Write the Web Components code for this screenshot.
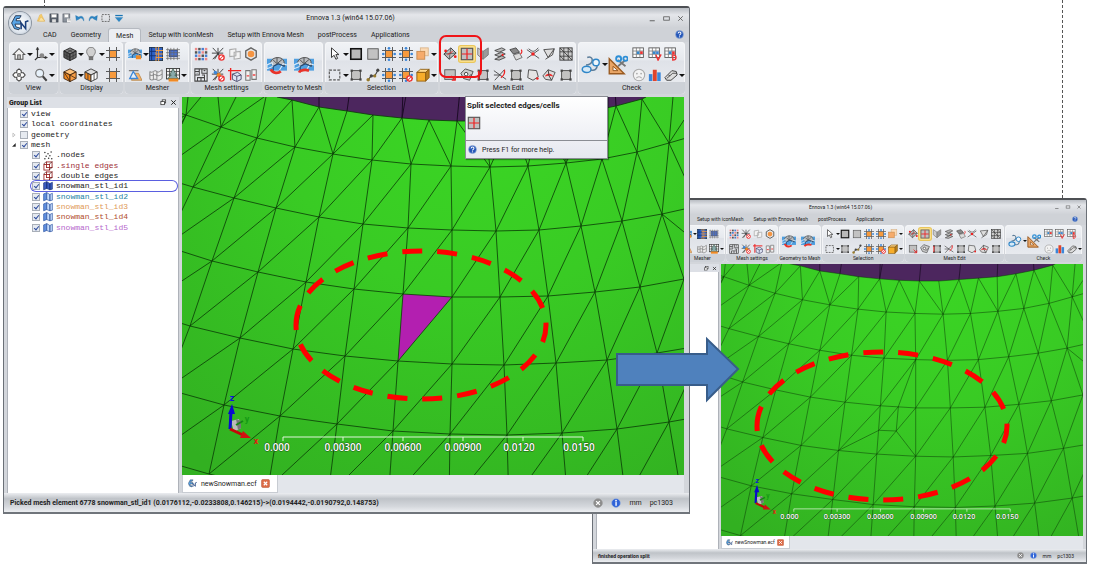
<!DOCTYPE html>
<html lang="en">
<head>
<meta charset="utf-8">
<title>Ennova mesh edit: split selected cells</title>
<style>
html,body{margin:0;height:100%;background:#fff;overflow:hidden}
body{font-family:Roboto,"Liberation Sans",sans-serif;color:#222}
</style>
</head>
<body>
<split-tutorial></split-tutorial>
<script>
/* ---------- icon library, drawn on a 16 x 16 grid ---------- */
const box = (x,y,w,h,f,s='#333',k=1)=>`<rect x="${x}" y="${y}" width="${w}" height="${h}" fill="${f}" stroke="${s}" stroke-width="${k}"/>`;
const ln = (d,s='#333',k=1,f='none')=>`<path d="${d}" stroke="${s}" stroke-width="${k}" fill="${f}"/>`;
const dot = (x,y,r,f)=>`<circle cx="${x}" cy="${y}" r="${r}" fill="${f}"/>`;
const corners = (c)=>[[3,3],[13,3],[3,13],[13,13]].map(p=>`<rect x="${p[0]-1.2}" y="${p[1]-1.2}" width="2.6" height="2.6" fill="${c}"/>`).join('');
const hash = '<path d="M4 0V16M12 0V16M0 4H16M0 12H16" stroke="#555" stroke-width="1.1"/>';
const cube = (a,b,c,s)=>ln('M8 1L15 4.5L8 8L1 4.5Z',s,1,a)+ln('M1 4.5L8 8V15.5L1 12Z',s,1,b)+ln('M15 4.5L8 8V15.5L15 12Z',s,1,c);
const geo = '<rect x="0" y="3" width="16" height="9.5" fill="#4f9fe0"/>'+ln('M3 5.5C4 1.5 12 .5 13.5 5L14 9L9 7L5 9Z','#555',.8,'#b9bcc0')+ln('M8 1.8V7M5 4L8 7L12 3.6','#555',.8)+ln('M0 8L4 6L5 9L0 11ZM16 8L13 7L10 12','#dcecfa',.9)+ln('M5 9L9 7L14 9M5 9V12.5','#234a78',.9);
const net = ln('M2 1L14 14M14 1L2 14M8 1V8M1 7H14M4 14L8 8L12 14');
const no = '<circle cx="12" cy="12" r="3" fill="#fff" stroke="#e33" stroke-width="1.6"/><path d="M10 14L14 10" stroke="#e33" stroke-width="1.2"/>';
const calc = (c,t)=>box(1,1,12,11,'#fff','#555')+ln('M1 4.6H13M1 8.3H13M5 1V12M9 1V12','#777',.9)+`<rect x="5.5" y="5" width="3" height="3" fill="#38c"/><rect x="9.3" y="5" width="3" height="3" fill="${c}"/>`+t;
const bluePoints=dot(8,1.5,1.5,'#3b86d8')+dot(8,14.5,1.5,'#3b86d8')+dot(1.5,8,1.5,'#3b86d8')+dot(14.5,8,1.5,'#3b86d8');
const ICONS = {
home: ln('M1.5 8.5L8 2L14.5 8.5H12.5V14H3.5V8.5Z','#555',1.2,'#f3f3f3')+box(6.5,9,3,5,'#bbb','#555'),
axes: ln('M4 1V12H14M4 12L1 15','#333',1.4)+ln('M4 0L2.5 3H5.5ZM15.5 12L12.5 10.5V13.5Z','#333',.5,'#333')+dot(9,10,2.8,'#888'),
pan: ln('M8 1L10.5 3V5.5H13L15 8L13 10.5H10.5V13L8 15L5.5 13V10.5H3L1 8L3 5.5H5.5V3Z','#444',1.2,'#fff')+box(6.5,6.5,3,3,'#999','#444',.8),
zoom: '<circle cx="6.5" cy="6" r="4.5" fill="#e8f2fb" stroke="#777" stroke-width="1.4"/>'+ln('M10 9.5L14.5 14.5','#444',2.4),
cubeDark: cube('#888','#555','#6c6c6c','#222')+ln('M4.5 2.7L11.5 6.3V14M11.5 2.7L4.5 6.3V14M1 8.3L8 12L15 8.3','#333',.8),
bulb: ln('M5.5 11C5 9 3 8 3 5.3A5 5 0 0 1 13 5.3C13 8 11 9 10.5 11Z','#777',1,'#d0d0d0')+box(6,11.5,4,3,'#777','#666'),
gridSel: '<rect x="4" y="4" width="8" height="8" fill="#f79a3c"/>'+hash,
gridSelPts: '<rect x="4" y="4" width="8" height="8" fill="#f79a3c"/>'+hash+bluePoints,
gridSelNo: '<rect x="4" y="4" width="8" height="8" fill="#f79a3c"/>'+hash+bluePoints+no,
cubeOrange: cube('#ffc27a','#f08a24','#f79d46','#3b2410')+ln('M1 4.5L8 15.5M8 8L15 12','#3b2410',.9),
cubeOpen: cube('#ddd','#f08a24','#fff','#333')+ln('M4.5 6V13.5M11.5 6V13.5','#333',.9),
geoTop: geo+'<rect x="9" y="9.500" width="6" height="4.500" fill="#f08a24"/>',
meshBlue: box(.5,.5,15,15,'#2d62c8','#234')+ln('M8 0V16M11 0V16M8 4H16M8 8H16M8 12H16','#f59a3a',1.1)+ln('M3 0V16M0 5H8M0 10H8','#14306e'),
meshHatch: box(4,4,9,7,'#4b74d6','#2a4aa0')+ln('M0 3H16M0 6.5H16M0 10H16M0 13H16M2 1V15M5.5 1V15M9 1V15M13 1V15','#666',.8),
triPlane: ln('M6 6H12L16 14H4Z','#b98a50',1,'#f7b36c')+ln('M1 3H12','#777',1.4)+ln('M2 12L6 4L11 12Z','#3b86d8',1.5,'#e6f0fa'),
surf: ln('M1 4C4 7 6 1 9 4C11 6 13 3 15 2V12C12 14 11 15 8 13C6 12 4 15 1 13ZM1 8C4 10 6 6 8 8C11 10 13 8 15 7M5 5V13M9 4V13','#777',1,'#ececec'),
meshTree: box(.5,.5,15,12,'#eee','#333')+ln('M0 4H16M0 8H16M4 0V13M12 0V13','#444',.9)+ln('M8 1L12 8H10L14 12H2L6 8H4Z','#354',.8,'#8aa')+'<rect x="3" y="12" width="11" height="3.5" fill="#f08a24"/>',
sizes: [1,4.8,8.6,12.4].map((y,i)=>[1,4.8,8.6,12.4].map((x,j)=>`<rect x="${x}" y="${y}" width="2.8" height="2.8" fill="${(i+j)%3==0?'#e88':(i+j)%3==1?'#555':'#4a7fd0'}"/>`).join('')).join(''),
netNo: net+no,
ghost: ln('M2 3L9 2V10L2 11ZM7 6L14 5V13L7 14Z','#aaa',1.2,'#f4f4f4'),
hexOrange: ln('M8 1L14 4.5V11.5L8 15L2 11.5V4.5Z','#666',1.6,'#e8e8e8')+dot(8,8,3.8,'#f59543'),
maze: ln('M1 1H15V15H1ZM1 4H6V8H1M6 1V4M9 1V6H15M4 15V11H8V15M8 11H12V8H9M12 11V15M3 6H4M11 3H13','#444',1.2),
netPts: net+dot(5,5,2,'#3b86d8')+dot(9,8,2.4,'#f08a24')+no,
cubeRed: ln('M5 7L11 5L15 8V13L10 15.5L5 13Z','#446',1,'#dfe5f5')+ln('M5 7L10 9.5L15 8M10 9.5V15','#446')+ln('M3 0V14M0 3H15','#e22',1.6),
panels: ln('M2 3H7V14H2ZM9 2H14V13H9Z','#777',1.2,'#f2f2f2')+ln('M3 9H6M10 8H13','#e44',1.6),
geoBig: geo+ln('M3 11.5C5 15 9 15 11 13','#e8332a',2.2),
geoBig2: geo+ln('M4 14C5 12 9 11.5 12 12.5','#e8332a',2.2),
cursor: ln('M4 1V12L7 9.5L9 14L11 13L9 8.7H12.5Z','#333',1.1,'#fff'),
dashSel: '<rect x="1.5" y="2.5" width="12" height="11" fill="none" stroke="#555" stroke-width="1.3" stroke-dasharray="3 1.6"/>',
square: box(2,2,12,12,'#b9b9b9','#111',1.8),
squareThin: box(2,2,12,12,'#c2c2c2','#555',1),
squarePts: box(3,3,10,10,'#c2c2c2','#444',1)+corners('#444'),
nodes: ln('M2 14L6 9L10 9L14 2','#444',1.2)+dot(2.5,13.5,2,'#987b2c')+dot(6,9,1.8,'#444')+dot(10,9,1.8,'#987b2c')+dot(13.5,2.5,1.8,'#444'),
layerFade: box(5,1,9,9,'#fbd9b4','#d8b48a')+box(1,5,9,9,'#f6ab6b','#c98a4c'),
cubeYellow: ln('M1 5L5 1.5H15L11 5Z','#8a5a10',1,'#ffd98a')+ln('M11 5L15 1.5V11L11 15Z','#8a5a10',1,'#b9801d')+box(1,5,10,10,'#f7ad2a','#8a5a10'),
rotQuad: ln('M1 8L9 1L15 7L7 14Z','#444',1.1,'#bdbdbd')+ln('M1 8L15 7M9 1L7 14','#444',.8)+dot(3,4.5,1.6,'#e22')+dot(14,11,1.6,'#e22')+ln('M5 9L11 5','#e22'),
split: box(1.5,1.5,13,13,'#c0c0c0','#555',1.3)+ln('M8 2V14M2 8H14','#e22',1.4),
foldV: ln('M2 1L8 5V14L2 9Z','#777',1,'#ccc')+ln('M14 1L8 5V14L14 9Z','#777',1,'#9a9a9a'),
stack: ln('M2 4L10 1L14 3L7 6ZM2 9L10 6L14 8L7 11ZM2 14L10 10L14 12L7 15Z','#444',1,'#bbb')+dot(11,9,1.2,'#e22'),
flip: ln('M1 3L8 1L12 6L5 8Z','#444',1,'#888')+ln('M5 9L12 7L15 12L8 15Z','#666',1,'#ddd')+ln('M14 3C15 5 15 7 13 8','#e22',1.3),
crossPt: ln('M1 3L15 13M15 3L1 13M3 2C8 6 9 6 14 1','#444',1)+dot(8,8,2,'#e22'),
wing: ln('M2 3L14 2L7 12ZM14 2L12 9L7 12L4 14','#444',1,'#ddd'),
gridTri: box(1,1,14,14,'#ccc','#333')+ln('M1 5.5H15M1 10.5H15M5.5 1V15M10.5 1V15M1 1L15 15M1 10L6 15M10 1L15 6','#333',.9),
redCorner: box(2,2,12,11,'#c0c0c0','#555')+ln('M9 9L14 14M14 10V14H10','#e22',1.3),
tiltQuad: ln('M1 6L6 1L15 4L11 14L4 12Z','#444',1,'#ccc')+'<circle cx="7" cy="7" r="2" fill="#fff" stroke="#333"/>'+ln('M9 11L13 7'),
redSide: box(4,3,9,10,'#c6c6c6','#444')+corners('#444')+ln('M3 3V13','#e22',1.6),
crossRed: ln('M1 3L15 13M13 2L2 14M1 8L8 8','#444',1)+ln('M13 2C14 6 12 9 9 11','#e22',1.5),
bend: ln('M3 2L12 3L14 10L8 14L2 11Z','#444',1,'#e4e4e4')+dot(13,12,1.5,'#e22'),
fan: ln('M1 9L7 2L15 5L11 14L4 13Z','#444',1,'#ddd')+ln('M4 9A5 5 0 0 1 12 9L8 8Z','#e22',1.1,'#f9a')+ln('M7 2L8 9L11 14'),
steth: ln('M5 2C7 1 9 2 9 4C9 7 6 8 4 8','#5b7c99',1.2)+'<ellipse cx="4.500" cy="11.500" rx="3.500" ry="2.500" fill="#d6e9f7" stroke="#2e86c8" stroke-width="1.2"/>'+ln('M8 12C11 13 13 11 13 8','#5b7c99',1.2)+'<circle cx="12" cy="6" r="2.600" fill="#eef6fc" stroke="#2e86c8" stroke-width="1.1"/>',
scissor: ln('M1 3V15H13Z','#9a5a20',1.1,'#e8a566')+ln('M4 9V12.5H8Z','#9a5a20',.8,'#f5f5f5')+ln('M8 9L14 4M8 4L14 9','#777',1.4)+'<circle cx="8.5" cy="3" r="2" fill="none" stroke="#2e8fd6" stroke-width="1.5"/><circle cx="14" cy="3" r="1.7" fill="none" stroke="#2e8fd6" stroke-width="1.5"/>',
calc: calc('#e33',''),
calcV: calc('#3b86d8',ln('M9 9L11.5 15L15 8.5','#e33',1.6)),
calcD: calc('#e33',ln('M10 9V15C15 15 15 9 10 9Z','#e33',1.5)),
sad: '<circle cx="8" cy="8" r="6.5" fill="#f3f3f3" stroke="#aaa" stroke-width="1.2"/>'+dot(5.6,6.4,1,'#aaa')+dot(10.4,6.4,1,'#aaa')+ln('M5 11.5C6.5 9.5 9.5 9.5 11 11.5','#aaa',1.2),
bars: '<rect x="1" y="7" width="4" height="8" fill="#3b86d8"/><rect x="5.5" y="2" width="4.5" height="13" fill="#e0442c"/><rect x="10.5" y="5" width="4" height="10" fill="#3b86d8"/>',
ruler: ln('M1 11L9 3L14 4L15 8L8 14H3Z','#444',1.1,'#ddd')+ln('M3 12L10 6H15M5 8L7 9','#444'),
open: ln('M2 13L6 3L9 2L10 5L14 13Z','#d9a544',.6,'#f8cf6a')+ln('M4 13L8 6L14 13Z','#c98e2e',.4,'#fbe2a0'),
save: box(1.5,1.5,13,13,'#58606c','#3a414c')+box(4,2,8,5,'#fff','#aaa',.6)+'<rect x="5" y="10" width="6" height="5" fill="#ddd"/>',
saveAs: box(1.5,1.5,11,13,'#8b929c','#555c66')+box(4,2,6,5,'#fff','#aaa',.6)+'<rect x="8" y="9" width="6" height="6" fill="#f2f2f2"/>'+ln('M9 11H14','#888'),
undo: ln('M1 4L2 12L7 9.5C9 7 12 8 14 13C15 7 11 3 6 6.5Z','#1c6ca6',.5,'#2d86c4'),
redo: ln('M15 4L14 12L9 9.5C7 7 4 8 2 13C1 7 5 3 10 6.5Z','#1c6ca6',.5,'#2d86c4'),
menu: ln('M2 4H14','#1c76b4',2)+ln('M2 7H14L8 14Z','#1c76b4',.5,'#2d86c4'),
logo: ln('M4 1.5H9L7.500 4H5L4.500 6H8.500V9H3.500L4.500 11.500L8 12.500L7 14L3 13L0.500 8Z','#16243c',.7,'#5aa5e6')+ln('M9 13.500V8L13 13V7L15.500 6','#1a3f7c',1.4),
help: '<circle cx="8" cy="8" r="7" fill="#2456b8" stroke="#9db6dc"/>'+ln('M5.5 6.2C5.5 2.8 10.8 3 10.5 6C10.2 7.8 8 7.8 8 9.8','#fff',1.8)+dot(8,12.2,1.1,'#fff'),
info: '<circle cx="8" cy="8" r="7" fill="#2f63d8" stroke="#9db6dc"/><rect x="7" y="6.5" width="2.2" height="6" fill="#fff"/>'+dot(8,4.2,1.4,'#fff'),
cancel: '<circle cx="8" cy="8" r="7" fill="#8c8c8c" stroke="#999"/>'+ln('M5 5L11 11M11 5L5 11','#fff',2),
closeTab: '<rect x="1" y="1" width="14" height="14" rx="2" fill="#dd6c48" stroke="#b85838"/>'+ln('M5 5L11 11M11 5L5 11','#fff',2.2),
minimize: ln('M3 12H12','#555',1.6), maximize: box(3,5,10,6,'none','#555',1.4), close: ln('M4 4L12 12M12 4L4 12','#555',1.5),
restore: box(5,2,8,7,'#fff','#222',1.6)+box(2,6,8,7,'#fff','#222',1.6), closeBold: ln('M3 3L13 13M13 3L3 13','#222',2.2),
points: [[3,4],[8,6],[13,3],[5,10],[11,9],[3,14],[9,13],[14,14]].map(p=>dot(p[0],p[1],1.2,'#333')).join(''),
wire: box(1.5,5.5,9,9,'none','#922',1.4)+box(5.5,1.5,9,9,'none','#922',1.4)+ln('M1 5L5 1M10 14L15 10M10 5L15 1','#422',1.1),
part: ln('M1 3L6 1V12L1 14Z','#234b9c',1,'#5f8fe0')+ln('M6 1L11 4V14L6 12ZM11 4L15 2V13L11 14Z','#234b9c',1,'#c4dafa'),
partDark: ln('M1 3L6 1V12L1 14ZM6 1L11 4V14L6 12ZM11 4L15 2V13L11 14Z','#152c74',1,'#3c5cc0'),
plus: ln('M5 3L11 8L5 13Z','#888',1.2,'#fff'), minus: ln('M12 4V12H4Z','#222',1,'#222')
};
customElements.define('glyph-icon', class extends HTMLElement{
  connectedCallback(){
    if(this.shadowRoot) return;
    this.attachShadow({mode:'open'}).innerHTML=`<style>:host{display:block;flex:none;width:var(--icon);height:var(--icon)}svg{display:block;width:100%;height:100%}</style><svg viewBox="0 0 16 16" aria-hidden="true">${ICONS[this.getAttribute('name')]}</svg>`;
  }
});

/* ---------- ribbon tool button ---------- */
customElements.define('tool-button', class extends HTMLElement{
  connectedCallback(){
    if(this.shadowRoot) return;
    const n=this.getAttribute('name');
    this.attachShadow({mode:'open'}).innerHTML=`<style>
:host{display:flex}
:host([big]){--icon:var(--bigicon)}
button{display:flex;align-items:center;gap:1px;border:0;background:none;margin:0;padding:0;border-radius:1px}
:host([active]) button{background:#fbe08a;box-shadow:0 0 0 1px #fbe08a,0 0 0 2px #e9c65c}
i{border:solid transparent;border-width:var(--caret) var(--caret) 0;border-top-color:#111}
</style><button aria-label="${n}"><glyph-icon name="${n}"></glyph-icon>${this.hasAttribute('menu')?'<i></i>':''}</button>`;
  }
});

/* ---------- titled ribbon group; tools come in through the slot ---------- */
customElements.define('ribbon-group', class extends HTMLElement{
  connectedCallback(){
    if(this.shadowRoot) return;
    const cols=this.getAttribute('cols').replace(/(\d+)fr/g,'minmax(0,$1fr)');
    this.attachShadow({mode:'open'}).innerHTML=`<style>
:host{display:grid;grid-template-rows:1fr var(--label);border-radius:4px;overflow:hidden;min-width:0;background:linear-gradient(#f1f3f6,#e6e9ee 35%,#dfe2e8 36%,#eceef2);box-shadow:inset 0 0 0 1px #f4f5f7}
.tools{display:grid;grid-template-columns:${cols};align-items:center;align-content:center;row-gap:var(--rowgap);padding:var(--toolpad) 1px 0 3px;min-width:0}
.label{background:#cdd1d7;white-space:nowrap;line-height:var(--label);font-size:var(--fs);display:flex;justify-content:center}
</style><div class="tools"><slot></slot></div><div class="label">${this.getAttribute('label')}</div>`;
  }
});

/* ---------- one row of the group tree ---------- */
customElements.define('tree-row', class extends HTMLElement{
  connectedCallback(){
    if(this.shadowRoot) return;
    const a=n=>this.getAttribute(n), icon=a('icon'), ex=a('expander');
    this.attachShadow({mode:'open'}).innerHTML=`<style>
:host{display:flex;align-items:center;padding-left:3px;--icon:10px}
:host([child]){padding-left:15px}
label{display:flex;align-items:center;gap:3px;flex:1;margin-right:1px;padding-left:1px;border-radius:5px;white-space:pre;color:${a('color')||'#222'};font:8px/10px "Liberation Mono",monospace}
:host([selected]) label{box-shadow:0 0 0 1px #5a5fe0}
.ex{width:8px;--icon:6px}
input{appearance:none;margin:0;width:8px;height:8px;border:1px solid #a9afb8;background:#e6eaf0;position:relative;flex:none}
input:checked::after{content:"";position:absolute;left:2px;top:0;width:2px;height:4px;border:solid #2f4d9e;border-width:0 1px 1px 0;rotate:40deg}
</style><span class="ex">${ex?`<glyph-icon name="${ex}"></glyph-icon>`:''}</span>
<label><input type="checkbox" ${this.hasAttribute('off')?'':'checked'}>${icon?`<glyph-icon name="${icon}"></glyph-icon>`:''}<span><slot></slot></span></label>`;
  }
});

/* ---------- 3D viewport: triangulated surface, triad and scale ---------- */
const A=[[292,100],[319,107],[347,111],[373,115],[402,118],[429,120],[457,121],[484,121],[512,119],[539,117],[565,115],[591,111],[616,106],[642,99]];
const B=[[148,102],[186,115],[221,127],[257,138],[295,147],[333,154],[372,160],[411,164],[451,166],[490,167],[528,166],[566,163],[602,159],[637,152],[669,143],[700,134]];
const C=[[112,157],[153,175],[193,187],[234,198],[276,208],[319,217],[363,224],[408,228],[452,230],[496,231],[539,230],[581,226],[622,221],[662,214],[698,206]];
const D=[[165,246],[212,261],[258,272],[306,282],[354,289],[403,294],[452,297],[500,297],[548,296],[595,292],[640,287],[684,279]];
const E=[[138,310],[190,326],[240,338],[293,349],[345,356],[398,361],[452,364],[504,365],[556,363],[607,360],[657,353],[705,345]];
const F=[[166,389],[224,405],[280,416],[337,424],[393,431],[450,434],[507,435],[562,433],[617,429],[669,422],[720,413]];
const G=[[150,457],[209,474],[268,488],[328,496],[388,503],[449,506],[509,507],[568,505],[626,500],[681,493],[736,484]];
const seg=(p,q)=>`M${p}L${q}`, poly=r=>'M'+r.join('L');
function lattice(top,bot,off){ /* off: index shift from the lower row to the upper one */
  let d='';
  bot.forEach((p,i)=>{const u=top[i+off],v=top[i+off+1]; if(u)d+=seg(p,u); if(v)d+=seg(p,v);});
  return d;
}
function surface(split){
  let d=[A,B,C,D,E,F,G].map(poly).join('');
  d+=lattice(B,C,0)+lattice(C,D,2)+lattice(D,E,0)+lattice(E,F,1)+lattice(F,G,0);
  [[0,4],[0,3],[1,4],[1,5],[2,5],[3,5],[3,6],[4,6],[4,7],[5,7],[5,8],[6,8],[6,9],[7,9],[8,9],[8,10],[9,10],[9,11],[10,11],[11,11],[11,12],[12,12],[12,13],[13,13],[13,14]].forEach(([a,b])=>d+=seg(A[a],B[b]));
  d+='M257 138L266 97M221 127L218 97M221 127L236 97M221 127L264 97M186 115L188 97M186 115L201 97M186 115L182 124M669 143L673 97M662 214L684 232M669 143L684 120M642 99L646 97M277 97L292 100';
  if(split)d+='M428 295L425 329L401 328L428 295L452 230M425 329L452 364M401 328L345 356';
  return d;
}
customElements.define('mesh-view', class extends HTMLElement{
  connectedCallback(){
    if(this.shadowRoot) return;
    const split=this.hasAttribute('split');
    const ticks=[283,343,403,463,523,583];
    const labels=[[277,'0.000'],[343,'0.00300'],[403,'0.00600'],[463,'0.00900'],[519,'0.0120'],[579,'0.0150']];
    this.attachShadow({mode:'open'}).innerHTML=`<style>
:host{display:block;min-height:0;min-width:0;overflow:hidden;background:#37c223}
svg{display:block;width:100%;height:100%}
text{font:600 10px "Open Sans",sans-serif;text-anchor:middle;fill:#fff;stroke:#1c5a14;stroke-width:1;paint-order:stroke}
.ax{font:bold 9px Roboto,sans-serif;stroke:none}
</style><svg viewBox="182 97 502 378" preserveAspectRatio="xMidYMid slice">
<defs><radialGradient id="g" gradientUnits="userSpaceOnUse" cx="480" cy="80" r="470"><stop offset="0" stop-color="#3bd824"/><stop offset=".45" stop-color="#39cb24"/><stop offset="1" stop-color="#32b021"/></radialGradient></defs>
<rect x="180" y="95" width="510" height="384" fill="url(#g)"/>
<path d="M277 97L${A.join('L')}L646 97Z" fill="#4c265e"/>
<path d="M319 107V90M347 111L350 90M402 118L403 90M402 118L407 90M457 121L460 90M512 119L515 90M565 115L566 90M616 106L615 90" stroke="#1c0c26" stroke-width="1"/>
${split?'':'<path d="M403 294L452 297L398 361Z" fill="#b31fb0"/>'}
<path d="${surface(split)}" fill="none" stroke="#0a3a06" stroke-width="${split?0.7:0.8}"/>
<path d="M231 421L239 419L241 428L234 432Z" fill="#bbb"/><path d="M236 419L241 421V428L238 430Z" fill="#777"/>
<path d="M236 425L243 421" stroke="#138a13" stroke-width="2"/>
<path d="M230 429L231 412" stroke="#0a0ad0" stroke-width="3"/><path d="M228 414L232 404L235 414Z" fill="#0a0ad0"/>
<path d="M230 429L243 435" stroke="#c40808" stroke-width="3"/><path d="M243 431L251 438L240 438Z" fill="#d01010"/>
<text class="ax" x="232" y="401" style="fill:#1010e0">z</text><text class="ax" x="247" y="422" style="fill:#159a15">y</text><text class="ax" x="256" y="444" style="fill:#e02010">x</text>
<path d="M283 441V437H583V441${ticks.slice(1,5).map(x=>`M${x} 437V441`).join('')}" fill="none" stroke="#dff5da"/>
${labels.map(l=>`<text x="${l[0]}" y="451">${l[1]}</text>`).join('')}
</svg>`;
  }
});

/* ---------- application window ---------- */
const tools = list => list.split(' ').map(t=>{
  const n=t.replace(/[\^*]/g,'');
  return `<tool-button name="${n}"${t.includes('^')?' menu':''}${t.includes('*')?' active':''}></tool-button>`;
}).join('');
const GROUPS = [
 ['View','22fr 22fr','home^ axes^ pan zoom^'],
 ['Display','21fr 22fr 17fr','cubeDark^ bulb^ gridSel cubeOrange^ cubeOpen gridSel'],
 ['Mesher','21fr 17fr 22fr','geoTop^ meshBlue meshHatch triPlane surf meshTree^'],
 ['Mesh settings','repeat(4,1fr)','sizes netNo ghost hexOrange maze netPts cubeRed panels'],
 ['Geometry to Mesh','1fr 1fr',null],
 ['Selection','21fr 17fr 16fr 17fr 17fr 21fr','cursor^ square squareThin gridSelPts gridSelPts layerFade^ dashSel^ squarePts nodes gridSelPts gridSelNo cubeYellow^'],
 ['Mesh Edit','repeat(8,1fr)','rotQuad split* foldV stack flip crossPt wing gridTri redCorner tiltQuad redSide crossRed squarePts bend fan squarePts'],
 ['Check','28fr 25fr 17fr 17fr 21fr',null]
];
function group([label,cols,list]){
  let body;
  if(label==='Geometry to Mesh') body='<tool-button big name="geoBig"></tool-button><tool-button big name="geoBig2"></tool-button>';
  else if(label==='Check') body='<tool-button big name="steth" menu style="grid-row:span 2"></tool-button><tool-button big name="scissor" style="grid-row:span 2"></tool-button>'+tools('calc calcV calcD sad bars ruler^');
  else body=tools(list);
  return `<ribbon-group label="${label}" cols="${cols}">${body}</ribbon-group>`;
}
customElements.define('app-window', class extends HTMLElement{
  connectedCallback(){
    if(this.shadowRoot) return;
    const small=this.hasAttribute('compact');
    const tabs=['CAD','Geometry','Mesh','Setup with iconMesh','Setup with Ennova Mesh','postProcess','Applications'];
    this.attachShadow({mode:'open'}).innerHTML=`<style>
:host{--fs:7px;--icon:14px;--bigicon:20px;--caret:3px;--label:12px;--rowgap:7px;--toolpad:5px;--title:20px;--tabs:14px;--ribbon:52px;--status:19px;--doc:18px;--panel:172px;--head:11px;
 display:grid;box-sizing:border-box;grid-template-rows:var(--title) var(--tabs) var(--ribbon) 1fr var(--status);
 border:1px solid #6b7077;border-width:2px 1px;border-top-color:#4d5054;border-bottom-color:#70757b;border-radius:3px 3px 0 0;padding:0 3px;background:#d3d6db;font-size:var(--fs)}
:host([compact]){--fs:5px;--icon:10px;--bigicon:14px;--caret:2px;--label:8px;--rowgap:5px;--toolpad:3px;--title:13px;--tabs:12px;--ribbon:37px;--status:13px;--doc:13px;--panel:123px;--head:8px}
header{display:grid;grid-row:span 2;grid-template-columns:29px 1fr;grid-template-rows:var(--title) var(--tabs);margin:0 -3px;padding:0 3px;background:linear-gradient(#b9bdc3,#e4e6ea 20%,#cfd2d7 58%,#cfd2d7)}
:host([compact]) header{grid-template-columns:96px 1fr}
.orb{grid-row:span 2;width:22px;height:22px;border-radius:50%;margin:4px 0 0 2px;display:grid;place-items:center;border:0;padding:0;background:radial-gradient(#fff,#dfe6ee 60%,#9aa6b4);box-shadow:0 0 0 1px #8b95a1;--icon:18px}
.bar{display:grid;grid-template-columns:1fr auto 1fr;align-items:center;--icon:10px}
.qat,.ctl{display:flex;gap:3px}
.ctl{justify-content:flex-end;gap:5px;padding-right:1px;--icon:9px}
:host([compact]) .ctl{--icon:6px}
h1{margin:0 21px 0 0;font:inherit;white-space:nowrap}
:host([compact]) h1{margin-right:94px}
.plain{border:0;background:none;padding:0;margin:0;font:inherit;color:inherit;white-space:nowrap}
nav{display:flex;align-items:stretch;--icon:9px}
nav .plain{padding:0 7px}
nav .on{background:#eceef2;border-radius:2px 2px 0 0;box-shadow:0 0 0 1px #b5b9c0;margin:1px 1px 0}
:host([compact]) nav{--icon:6px}
:host([compact]) nav .plain{padding:0 5px}
nav .plain.help{margin-left:auto;padding:0 2px 2px}
.ribbon{display:grid;grid-template-columns:49fr 64fr 64fr 71fr 59fr 114fr 137fr 107fr;gap:2px;padding:0 1px 0 2px;background:#d3d6db}
:host([compact]) .ribbon{gap:1px;padding:0 1px 0 0}
:host([compact]) ribbon-group:first-child{grid-column:3}
.main{display:grid;min-height:0;grid-template-columns:var(--panel) 1fr;gap:3px;padding:3px 2px 0 0}
:host([compact]) .main{gap:2px;padding:2px 0 0}
.panel,.view{display:grid;min-height:0;min-width:0}
.panel{grid-template-rows:var(--head) 1fr;--icon:7px}
:host([compact]) .panel{--icon:5px}
.ph{display:flex;align-items:center;gap:3px;font-weight:bold;padding:0 2px;background:#dde0e6}
.ph b{margin-right:auto}
.tree{background:#fff;border:1px solid #aeb2b9;border-width:0 1px;display:block}
.view{grid-template-rows:1fr var(--doc);background:#e3e6eb}
.doc{display:flex;align-items:center;gap:4px;background:#fff;justify-self:start;padding:0 7px 0 5px;--icon:9px;border:1px solid #c8ccd2;border-top:0;box-sizing:border-box;height:100%}
:host([compact]) .doc{--icon:7px;gap:2px;padding:0 5px 0 4px}
footer{display:flex;align-items:center;background:linear-gradient(#eceef1,#bfc3c8 30%,#d4d7dc 70%,#eceef1);margin:0 -3px;padding:0 16px 0 6px;white-space:nowrap;--icon:10px;gap:8px}
footer b{margin-right:auto}
:host([compact]) footer{--icon:7px;gap:6px;padding:0 12px 0 5px}
</style>
<header>
${small?'<span style="grid-row:span 2"></span>':'<button class="orb" aria-label="Application menu"><glyph-icon name="logo"></glyph-icon></button>'}
<div class="bar"><div class="qat">${small?'':['open','save','saveAs','undo','redo','dashSel','menu'].map(n=>`<button class="plain" aria-label="${n}"><glyph-icon name="${n}"></glyph-icon></button>`).join('')}</div>
<h1>Ennova 1.3 (win64 15.07.06)</h1>
<div class="ctl">${['minimize','maximize','close'].map(n=>`<button class="plain" aria-label="${n}"><glyph-icon name="${n}"></glyph-icon></button>`).join('')}</div></div>
<nav>${tabs.slice(small?3:0).map(t=>`<button class="plain${t==='Mesh'?' on':''}">${t}</button>`).join('')}<button class="plain help" aria-label="Help"><glyph-icon name="help"></glyph-icon></button></nav>
</header>
<div class="ribbon">${GROUPS.slice(small?2:0).map(group).join('')}</div>
<div class="main">
<section class="panel"><div class="ph"><b>${small?'':'Group List'}</b><glyph-icon name="restore"></glyph-icon><glyph-icon name="closeBold"></glyph-icon></div>
<div class="tree"><slot></slot></div></section>
<section class="view"><mesh-view ${small?'split':''}></mesh-view>
<div class="doc"><glyph-icon name="logo"></glyph-icon><span>newSnowman.ecf</span><button class="plain" aria-label="Close document"><glyph-icon name="closeTab"></glyph-icon></button></div></section>
</div>
<footer><b>${this.getAttribute('status')}</b><button class="plain" aria-label="Cancel"><glyph-icon name="cancel"></glyph-icon></button><glyph-icon name="info"></glyph-icon><span>mm</span><span>pc1303</span></footer>`;
  }
});

/* ---------- hover help card ---------- */
customElements.define('help-card', class extends HTMLElement{
  connectedCallback(){
    if(this.shadowRoot) return;
    this.attachShadow({mode:'open'}).innerHTML=`<style>
:host{display:grid;grid-template-rows:1fr 18px;box-sizing:border-box;background:linear-gradient(#fff,#e6e8f0);border:1px solid #8a8d94;font-size:7px;box-shadow:1px 1px 1px #0005}
.top{display:flex;flex-direction:column;align-items:flex-start;gap:6px;padding:4px 1px;--icon:14px}
b{font-size:8px;line-height:9px}
.foot{display:flex;align-items:center;gap:5px;padding-left:2px;border-top:1px solid #8a8d94;--icon:9px}
</style><div class="top"><b><slot></slot></b><glyph-icon name="split"></glyph-icon></div><div class="foot"><glyph-icon name="help"></glyph-icon><span>Press F1 for more help.</span></div>`;
  }
});

/* ---------- slide: both windows and the annotations above them ---------- */
customElements.define('split-tutorial', class extends HTMLElement{
  connectedCallback(){
    if(this.shadowRoot) return;
    const ring=(x,y)=>`<path d="M${x} ${y}a125 74 0 0 1 250 0a125 74 0 0 1 -250 0" fill="none" stroke="#f00" stroke-width="5" stroke-dasharray="20 15"/>`;
    this.attachShadow({mode:'open'}).innerHTML=`<style>
:host{display:block;position:relative;height:100vh;min-height:480px;overflow:hidden;background:#fff}
app-window,help-card,svg{position:absolute}
.before{left:3px;top:6px;bottom:57px;width:round(62.85vw,1px)}
.after{right:6px;top:198px;bottom:7px;width:round(45.3vw,1px)}
help-card{left:465px;top:96px;width:143px;height:63px}
svg{left:0;top:0;width:100%;height:100%;pointer-events:none}
.rows{display:grid;grid-auto-rows:1fr;height:124px;padding-top:1px}
</style>
<app-window class="after" compact status="finished operation split"></app-window>
<app-window class="before" status="Picked mesh element 6778 snowman_stl_id1 (0.0176112,-0.0233808,0.146215)-&gt;(0.0194442,-0.0190792,0.148753)">
<div class="rows">
<tree-row>view</tree-row><tree-row>local coordinates</tree-row><tree-row expander="plus" off>geometry</tree-row><tree-row expander="minus">mesh</tree-row>
<tree-row child icon="points">.nodes</tree-row><tree-row child icon="wire" color="#a03038">.single edges</tree-row><tree-row child icon="wire">.double edges</tree-row>
<tree-row child icon="partDark" selected>snowman_stl_id1</tree-row><tree-row child icon="part" color="#2484a4">snowman_stl_id2</tree-row><tree-row child icon="part" color="#e09a58">snowman_stl_id3</tree-row><tree-row child icon="part" color="#b04c2c">snowman_stl_id4</tree-row><tree-row child icon="part" color="#b668cc">snowman_stl_id5</tree-row>
</div></app-window>
<help-card>Split selected edges/cells</help-card>
<svg aria-hidden="true">
<path d="M44.5 0V6M1062.5 0V198" stroke="#555" stroke-dasharray="3 2"/>
<rect x="440" y="36" width="41" height="41" rx="6" fill="none" stroke="#f01418" stroke-width="2"/>
${ring(296,325)}${ring(757,426)}
<path d="M617 354H707V339L738 369L707 400V385H617Z" fill="#4f81bd" stroke="#385d8a" stroke-width="2"/>
</svg>`;
  }
});
</script>
</body>
</html>
